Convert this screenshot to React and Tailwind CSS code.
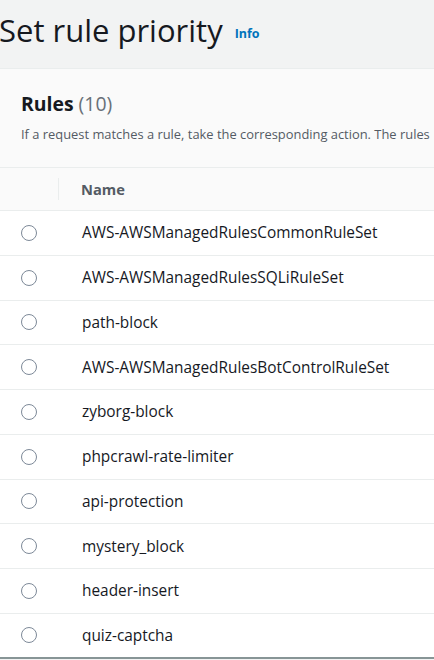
import React from "react";

const rules = [
  "AWS-AWSManagedRulesCommonRuleSet",
  "AWS-AWSManagedRulesSQLiRuleSet",
  "path-block",
  "AWS-AWSManagedRulesBotControlRuleSet",
  "zyborg-block",
  "phpcrawl-rate-limiter",
  "api-protection",
  "mystery_block",
  "header-insert",
  "quiz-captcha",
];

export default function App() {
  return (
    <div
      className="w-[434px] h-[660px] overflow-hidden bg-[#f2f3f3]"
      style={{ fontFamily: '"Open Sans", "Noto Sans", sans-serif' }}
    >
      <div className="h-[68px] flex items-start pt-[10px] gap-[12px]">
        <h1 className="text-[31px] leading-[40px] text-[#16191f] whitespace-nowrap ml-[-1px]">
          Set rule priority
        </h1>
        <span className="text-[12.5px] font-bold text-[#0073bb] mt-[15px]">Info</span>
      </div>
      <div className="bg-white border-t border-[#eaeded]">
        <div className="bg-[#fafafa] h-[99px] pl-[21px] pt-[22px] border-b border-[#eaeded]">
          <div className="text-[19.4px] leading-[26px] whitespace-nowrap">
            <span className="font-bold text-[#16191f]">Rules</span>{" "}
            <span className="text-[#687078]">(10)</span>
          </div>
          <div className="text-[12.9px] leading-[20px] text-[#545b64] whitespace-nowrap mt-[7px]">
            If a request matches a rule, take the corresponding action. The rules
          </div>
        </div>
        <div className="bg-[#fafafa] h-[43px] flex items-center border-b border-[#eaeded]">
          <div className="w-[59px] h-[22px] border-r border-[#eaeded]" />
          <div className="pl-[22px] text-[14.7px] font-bold text-[#545b64]">Name</div>
        </div>
        {rules.map((r, i) => (
          <div
            key={r}
            className={
              i === rules.length - 1
                ? "h-[44.78px] flex items-center border-b-2 border-[#879596] bg-white"
                : "h-[44.78px] flex items-center border-b border-[#eaeded] bg-white"
            }
          >
            <div className="w-[82px] shrink-0 flex pl-[21px]">
              <span className="w-[16px] h-[16px] shrink-0 rounded-full border-[1.5px] border-[#7d8998] bg-white" />
            </div>
            <div className="text-[15.4px] text-[#16191f] whitespace-nowrap">{r}</div>
          </div>
        ))}
      </div>
    </div>
  );
}
